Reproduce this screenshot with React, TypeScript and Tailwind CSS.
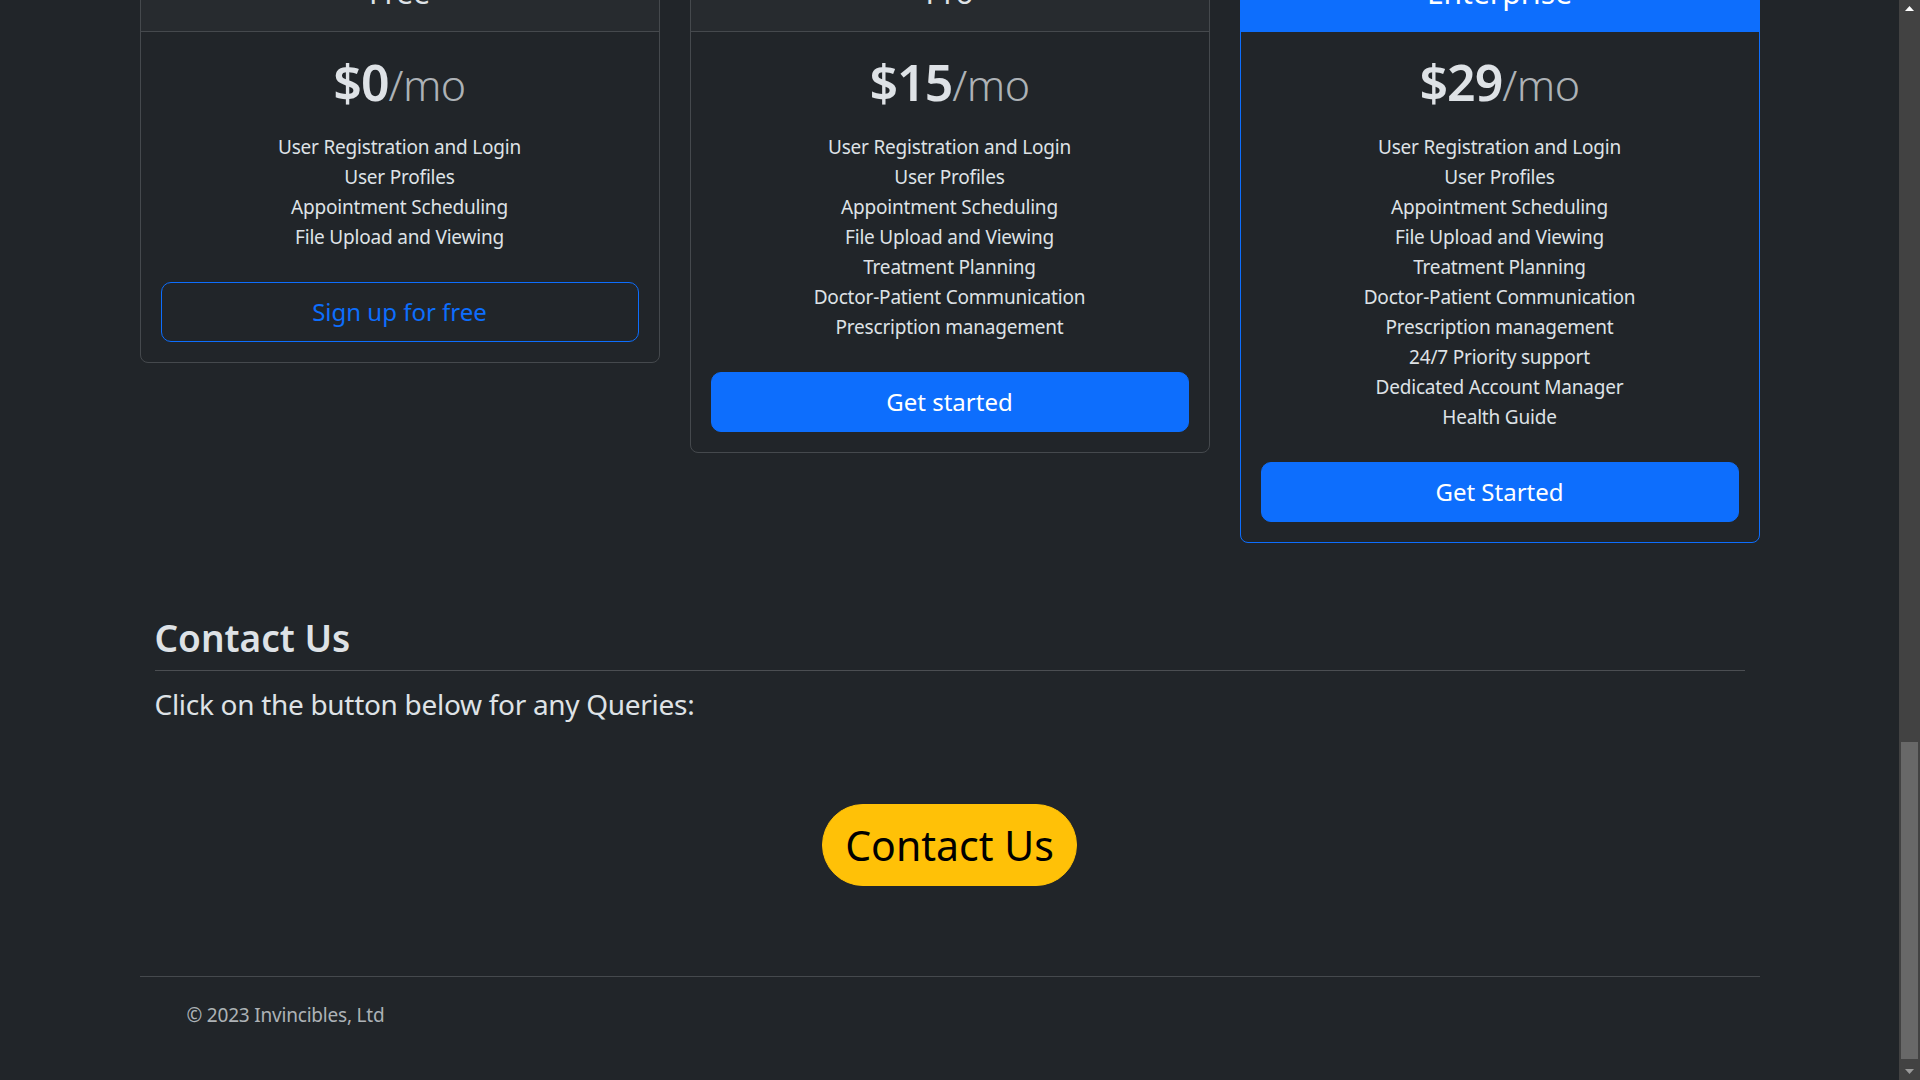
import React from "react";

interface Plan {
  name: string;
  price: string;
  features: string[];
  cta: string;
  outline?: boolean;
  featured?: boolean;
}

const baseFeatures = [
  "User Registration and Login",
  "User Profiles",
  "Appointment Scheduling",
  "File Upload and Viewing",
];

const proFeatures = [
  ...baseFeatures,
  "Treatment Planning",
  "Doctor-Patient Communication",
  "Prescription management",
];

const plans: Plan[] = [
  { name: "Free", price: "$0", features: baseFeatures, cta: "Sign up for free", outline: true },
  { name: "Pro", price: "$15", features: proFeatures, cta: "Get started" },
  {
    name: "Enterprise",
    price: "$29",
    features: [...proFeatures, "24/7 Priority support", "Dedicated Account Manager", "Health Guide"],
    cta: "Get Started",
    featured: true,
  },
];

const PlanCard = ({ plan }: { plan: Plan }) => {
  return (
    <div
      className={`rounded-[8px] border overflow-hidden text-center ${
        plan.featured ? "border-[#0d6efd]" : "border-[#45494d]"
      }`}
    >
      {/* Header */}
      <div
        className={`py-[20px] border-b ${
          plan.featured
            ? "bg-[#0d6efd] border-[#0d6efd] text-white"
            : "bg-[#272b2f] border-[#45494d] text-[#dee2e6]"
        }`}
      >
        <h4 className="text-[30px] leading-[36px]">{plan.name}</h4>
      </div>

      {/* Body */}
      <div className="p-[20px]">
        <h1 className="text-[50px] leading-[60px] font-semibold text-[#dee2e6] tracking-[-1px]">
          {plan.price}
          <small className="text-[43px] font-light text-[#dee2e6]/75 tracking-[-0.5px]">/mo</small>
        </h1>
        <ul className="mt-[17px] mb-[30px] text-[19px] leading-[30px] tracking-[-0.2px] text-[#dee2e6]">
          {plan.features.map((f) => (
            <li key={f}>{f}</li>
          ))}
        </ul>
        {plan.outline ? (
          <button className="w-full h-[60px] rounded-[10px] border border-[#0d6efd] text-[#0d6efd] text-[24px]">
            {plan.cta}
          </button>
        ) : (
          <button className="w-full h-[60px] rounded-[10px] border border-[#0d6efd] bg-[#0d6efd] text-white text-[24px]">
            {plan.cta}
          </button>
        )}
      </div>
    </div>
  );
};

const Scrollbar = () => (
  <div className="w-[21px] h-full bg-[#424242] flex flex-col items-center shrink-0">
    <div className="h-[17px] w-full flex items-center justify-center">
      <svg width="9" height="5" viewBox="0 0 9 5">
        <polygon points="4.5,0 9,5 0,5" fill="#ffffff" />
      </svg>
    </div>
    <div className="flex-1 w-full px-[2px] flex flex-col justify-end">
      <div className="h-[317px] w-full bg-[#686868] mb-[4px]" />
    </div>
    <div className="h-[17px] w-full flex items-center justify-center">
      <svg width="9" height="5" viewBox="0 0 9 5">
        <polygon points="0,0 9,0 4.5,5" fill="#9a9a9a" />
      </svg>
    </div>
  </div>
);

export default function App() {
  return (
    <div className="h-screen w-full overflow-hidden flex bg-[#212529] font-['Segoe_UI','Noto_Sans',sans-serif] text-[#dee2e6]">
      <div className="flex-1 overflow-hidden">
        <div className="w-[1620px] mx-auto -mt-[46px]">
          {/* Pricing cards */}
          <div className="grid grid-cols-3 gap-[30px] items-start">
            {plans.map((p) => (
              <PlanCard key={p.name} plan={p} />
            ))}
          </div>

          {/* Contact */}
          <div className="mx-[15px] mt-[71px]">
            <h2 className="text-[37px] leading-[48px] font-semibold">Contact Us</h2>
            <hr className="mt-[8px] border-t border-[#4b4e52]" />
            <p className="mt-[12px] text-[28px] leading-[42px] tracking-[-0.3px]">
              Click on the button below for any Queries:
            </p>
            <div className="flex justify-center mt-[79px]">
              <button className="rounded-full bg-[#ffc107] border border-[#ffc107] text-black text-[41px] leading-[60px] px-[22px] py-[10px]">
                Contact Us
              </button>
            </div>
          </div>

          {/* Footer */}
          <footer className="mt-[90px] border-t border-[#45494d] pt-[23px] pl-[47px]">
            <p className="text-[19px] leading-[30px] tracking-[-0.2px] text-[#dee2e6]/75">
              © 2023 Invincibles, Ltd
            </p>
          </footer>
        </div>
      </div>
      <Scrollbar />
    </div>
  );
}
